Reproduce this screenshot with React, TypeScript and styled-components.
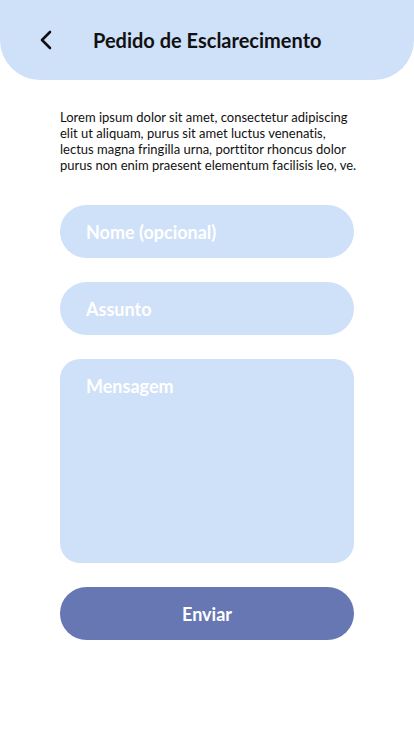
import React from 'react';
import styled, { createGlobalStyle } from 'styled-components';

const GlobalStyle = createGlobalStyle`
  body {
    margin: 0;
    background: #ffffff;
    font-family: Lato, "Noto Sans", sans-serif;
  }
  * { box-sizing: border-box; }
`;

const Page = styled.div`
  width: 414px;
  min-height: 736px;
  display: flex;
  flex-direction: column;
`;

const Header = styled.header`
  height: 80px;
  background: #cfe0f9;
  border-radius: 0 0 40px 40px;
  display: flex;
  align-items: center;
  padding: 0 0 0 36px;
`;

const BackButton = styled.button`
  width: 20px;
  height: 24px;
  border: none;
  background: none;
  padding: 0;
  display: flex;
  align-items: center;
  justify-content: center;
  cursor: pointer;
`;

const Title = styled.h1`
  margin: 0 0 0 37px;
  font-size: 20px;
  font-weight: 700;
  color: #111111;
`;

const Content = styled.main`
  padding: 29px 60px 0;
  display: flex;
  flex-direction: column;
`;

const Intro = styled.p`
  margin: 0 -10px 32px 0;
  font-size: 13px;
  line-height: 16px;
  color: #111111;
  font-variant-ligatures: none;
`;

const Form = styled.form`
  display: flex;
  flex-direction: column;
  gap: 24px;
`;

const Field = styled.input`
  height: 53px;
  border: none;
  border-radius: 27px;
  background: #cfe0f9;
  padding: 0 26px;
  font-family: Lato, sans-serif;
  font-size: 18px;
  font-weight: 700;
  color: #333333;
  outline: none;

  &::placeholder {
    color: #ffffff;
  }
`;

const MessageField = styled.textarea`
  height: 204px;
  border: none;
  border-radius: 20px;
  background: #cfe0f9;
  padding: 16px 26px;
  font-family: Lato, sans-serif;
  font-size: 18px;
  font-weight: 700;
  color: #333333;
  resize: none;
  outline: none;

  &::placeholder {
    color: #ffffff;
  }
`;

const SubmitButton = styled.button`
  height: 53px;
  border: none;
  border-radius: 27px;
  background: #6677b3;
  color: #ffffff;
  font-family: Lato, sans-serif;
  font-size: 18px;
  font-weight: 700;
  cursor: pointer;
`;

const App = () => {
  return (
    <>
      <GlobalStyle />
      <Page>
        <Header>
          <BackButton aria-label="Voltar">
            <svg width="14" height="20" viewBox="0 0 14 20" fill="none">
              <path d="M11 2 L3 10 L11 18" stroke="#111" strokeWidth="2.6" strokeLinecap="round" strokeLinejoin="round" />
            </svg>
          </BackButton>
          <Title>Pedido de Esclarecimento</Title>
        </Header>
        <Content>
          <Intro>
            Lorem ipsum dolor sit amet, consectetur adipiscing
            <br />
            elit ut aliquam, purus sit amet luctus venenatis,
            <br />
            lectus magna fringilla urna, porttitor rhoncus dolor
            <br />
            purus non enim praesent elementum facilisis leo, ve.
          </Intro>
          <Form onSubmit={(e) => e.preventDefault()}>
            <Field placeholder="Nome (opcional)" />
            <Field placeholder="Assunto" />
            <MessageField placeholder="Mensagem" />
            <SubmitButton type="submit">Enviar</SubmitButton>
          </Form>
        </Content>
      </Page>
    </>
  );
};

export default App;
